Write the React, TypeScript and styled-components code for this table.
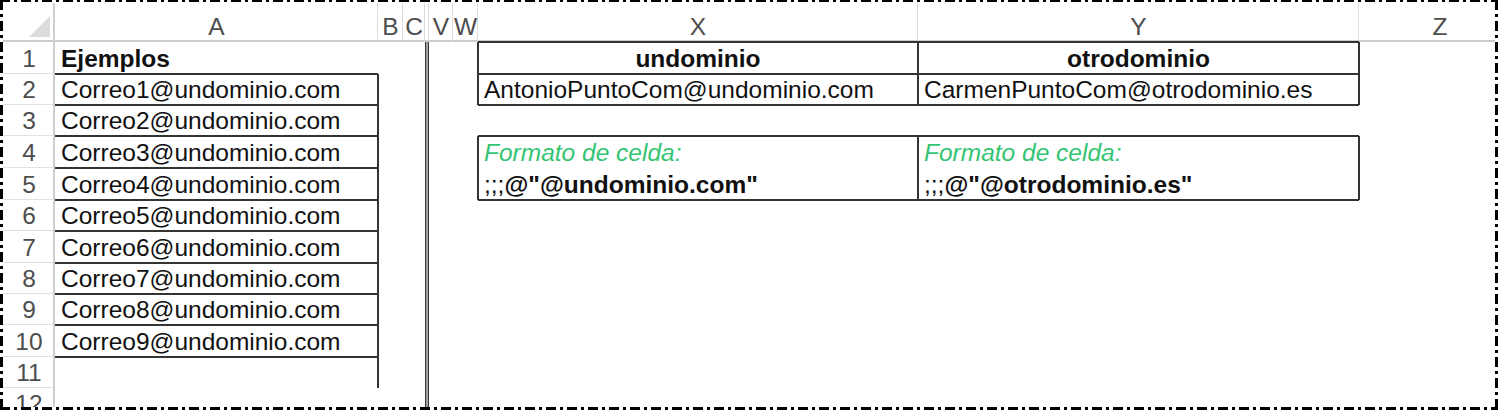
import React from "react";
import styled, { createGlobalStyle } from "styled-components";

const GlobalStyle = createGlobalStyle`
  html, body { margin: 0; padding: 0; background: #fff; }
  body { font-family: "Liberation Sans", Arial, sans-serif; }
`;

const INK = "#333";
const ROW_HEIGHTS = [32, 31, 31, 32, 32, 31, 32, 31, 31, 32, 31, 31];

type Col = "A" | "B" | "C" | "V" | "W" | "X" | "Y" | "Z";
const COLS: Col[] = ["A", "B", "C", "V", "W", "X", "Y", "Z"];

type Sides = { t?: boolean; r?: boolean; b?: boolean; l?: boolean };
type CellDef = { text?: React.ReactNode; sides?: Sides; center?: boolean; bold?: boolean };

// excel style thin border, 2px centred on the cell edge
function edges(s?: Sides) {
  if (!s) return "none";
  const out: string[] = [];
  if (s.t) out.push(`inset 0 1px 0 ${INK}`, `0 -1px 0 ${INK}`);
  if (s.b) out.push(`inset 0 -1px 0 ${INK}`, `0 1px 0 ${INK}`);
  if (s.l) out.push(`inset 1px 0 0 ${INK}`, `-1px 0 0 ${INK}`);
  if (s.r) out.push(`inset -1px 0 0 ${INK}`, `1px 0 0 ${INK}`);
  return out.join(", ");
}

const dashH = `repeating-linear-gradient(90deg, #000 0 10px, transparent 10px 14px, #000 14px 17px, transparent 17px 21px)`;
const dashV = `repeating-linear-gradient(180deg, #000 0 10px, transparent 10px 14px, #000 14px 17px, transparent 17px 21px)`;

const Frame = styled.div`
  box-sizing: border-box;
  width: 1498px;
  height: 410px;
  padding: 3px;
  background:
    ${dashH} left top / 100% 2px no-repeat,
    ${dashH} left bottom / 100% 3px no-repeat,
    ${dashV} left top / 3px 100% no-repeat,
    ${dashV} right top / 3px 100% no-repeat;
`;

const Sheet = styled.div`
  display: grid;
  grid-template-columns: 52px 323px 25px 22px 4px 24px 25px 440px 441px 162px;
  grid-template-rows: 39px ${ROW_HEIGHTS.map((h) => `${h}px`).join(" ")};
  height: 404px;
  overflow: hidden;
  font-size: 24.5px;
  line-height: 26px;
`;

const HeadCell = styled.div`
  display: flex;
  align-items: flex-end;
  justify-content: center;
  padding-bottom: 2px;
  color: #4d4d4d;
  box-shadow: inset -1px 0 0 #dcdcdc, inset 0 -2px 0 #cbcbcb;
`;

const Corner = styled(HeadCell)`
  justify-content: flex-end;
  padding: 0 5px 5px 0;
  box-shadow: inset -2px 0 0 #cfcfcf, inset 0 -2px 0 #cbcbcb;
`;

const Triangle = styled.span`
  width: 0;
  height: 0;
  border-left: 21px solid transparent;
  border-bottom: 21px solid #dcdcdc;
`;

const RowHead = styled.div`
  display: flex;
  align-items: flex-end;
  justify-content: center;
  padding-bottom: 2px;
  color: #4d4d4d;
  box-shadow: inset -2px 0 0 #cfcfcf, inset 0 -1px 0 #e2e2e2;
`;

const Cell = styled.div<{ $sides?: Sides; $center?: boolean; $bold?: boolean }>`
  display: flex;
  align-items: flex-end;
  justify-content: ${(p) => (p.$center ? "center" : "flex-start")};
  padding: 0 6px 2px;
  white-space: nowrap;
  color: #111;
  font-weight: ${(p) => (p.$bold ? 700 : 400)};
  box-shadow: ${(p) => edges(p.$sides)};
`;

const FreezeLine = styled.div`
  grid-column: 5;
  grid-row: 2 / -1;
  background: linear-gradient(90deg, #3a3a3a 0 1px, #a0a0a0 1px 3px, #3a3a3a 3px 4px);
`;

const Note = styled.span`
  font-style: italic;
  color: #34c472;
`;

const Strong = styled.span`
  font-weight: 700;
`;

const BOX: Sides = { t: true, r: true, b: true, l: true };

const cells: Record<number, Partial<Record<Col, CellDef>>> = {
  1: {
    A: { text: "Ejemplos", bold: true, sides: { b: true } },
    X: { text: "undominio", bold: true, center: true, sides: BOX },
    Y: { text: "otrodominio", bold: true, center: true, sides: BOX },
  },
  2: {
    X: { text: "AntonioPuntoCom@undominio.com", sides: BOX },
    Y: { text: "CarmenPuntoCom@otrodominio.es", sides: BOX },
  },
  4: {
    X: { text: <Note>Formato de celda:</Note>, sides: { t: true, l: true, r: true } },
    Y: { text: <Note>Formato de celda:</Note>, sides: { t: true, l: true, r: true } },
  },
  5: {
    X: { text: <>;;;<Strong>@"@undominio.com"</Strong></>, sides: { b: true, l: true, r: true } },
    Y: { text: <>;;;<Strong>@"@otrodominio.es"</Strong></>, sides: { b: true, l: true, r: true } },
  },
  11: { A: { sides: { r: true } } },
};

for (let n = 2; n <= 10; n++) {
  cells[n] = { ...cells[n], A: { text: `Correo${n - 1}@undominio.com`, sides: { b: true, r: true } } };
}

export default function App() {
  return (
    <>
      <GlobalStyle />
      <Frame>
        <Sheet>
          <Corner>
            <Triangle />
          </Corner>
          {COLS.slice(0, 3).map((c) => (
            <HeadCell key={c}>{c}</HeadCell>
          ))}
          <HeadCell />
          {COLS.slice(3).map((c) => (
            <HeadCell key={c}>{c}</HeadCell>
          ))}
          <FreezeLine />
          {ROW_HEIGHTS.map((_, i) => {
            const n = i + 1;
            const row = cells[n] ?? {};
            return (
              <React.Fragment key={n}>
                <RowHead>{n}</RowHead>
                {COLS.map((c) => {
                  const def = row[c];
                  return (
                    <Cell key={c} $sides={def?.sides} $center={def?.center} $bold={def?.bold}>
                      {def?.text}
                    </Cell>
                  );
                })}
              </React.Fragment>
            );
          })}
        </Sheet>
      </Frame>
    </>
  );
}
